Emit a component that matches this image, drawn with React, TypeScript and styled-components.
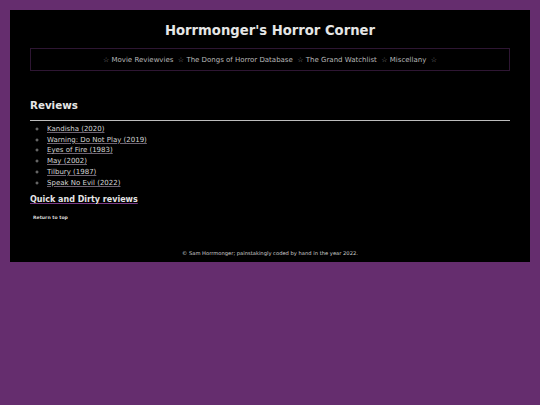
import React from 'react';
import styled, { createGlobalStyle } from 'styled-components';

const GlobalStyle = createGlobalStyle`
  html, body {
    margin: 0;
    padding: 0;
    background: #652d6e;
  }
  body {
    padding: 10px;
    font-family: "DejaVu Sans", Verdana, sans-serif;
    color: #dcdcdc;
  }
`;

const Page = styled.div`
  background: #000;
  padding: 12px 20px 5px;
`;

const Title = styled.h1`
  margin: 0;
  text-align: center;
  font-size: 13.2px;
  font-weight: bold;
  color: #e6e6e6;
  line-height: 18px;
`;

const Nav = styled.nav`
  margin-top: 8px;
  border: 1px solid #2e1633;
  height: 21px;
  display: flex;
  align-items: center;
  justify-content: center;
  font-size: 7px;
  color: #b8b8b8;
`;

const NavLine = styled.span`
  white-space: pre;
`;

const Star = styled.span`
  color: #8a8a8a;
`;

const SectionTitle = styled.h2`
  margin: 27px 0 0;
  font-size: 10.3px;
  font-weight: bold;
  color: #e6e6e6;
  line-height: 14px;
`;

const Rule = styled.hr`
  margin: 8px 0 0;
  border: none;
  border-top: 1px solid #bdbdbd;
`;

const List = styled.ul`
  margin: 3px 0 0;
  padding-left: 17px;
  font-size: 7px;
  line-height: 10.7px;
  list-style: circle;

  li::marker {
    color: #888;
    font-size: 6px;
  }
`;

const ReviewLink = styled.a`
  color: #d6d6d6;
  text-decoration: underline;
  text-decoration-color: #6e6472;
`;

const SubTitle = styled.a`
  display: block;
  margin-top: 6px;
  font-size: 8px;
  font-weight: bold;
  color: #e6e6e6;
  line-height: 12px;
  text-decoration: underline;
  text-decoration-color: #7b3b88;
  text-decoration-thickness: 1px;
`;

const TopLink = styled.a`
  display: block;
  margin: 9px 0 0 3px;
  font-size: 4.6px;
  font-weight: bold;
  color: #d8d8d8;
  text-decoration: none;
`;

const Footer = styled.footer`
  margin-top: 29px;
  text-align: center;
  font-size: 5.2px;
  color: #cfcfcf;
  line-height: 8px;
`;

const reviews = [
  'Kandisha (2020)',
  'Warning: Do Not Play (2019)',
  'Eyes of Fire (1983)',
  'May (2002)',
  'Tilbury (1987)',
  'Speak No Evil (2022)',
];

const navItems = ['Movie Reviewvies', 'The Dongs of Horror Database', 'The Grand Watchlist', 'Miscellany'];

export default function App() {
  return (
    <>
      <GlobalStyle />
      <Page>
        <Title>Horrmonger's Horror Corner</Title>
        <Nav>
          <NavLine>
            {navItems.map((item) => (
              <React.Fragment key={item}>
                <Star>☆</Star> {item}{'  '}
              </React.Fragment>
            ))}
            <Star>☆</Star>
          </NavLine>
        </Nav>
        <SectionTitle>Reviews</SectionTitle>
        <Rule />
        <List>
          {reviews.map((r) => (
            <li key={r}>
              <ReviewLink href="#">{r}</ReviewLink>
            </li>
          ))}
        </List>
        <SubTitle href="#">Quick and Dirty reviews</SubTitle>
        <TopLink href="#">Return to top</TopLink>
        <Footer>© Sam Horrmonger; painstakingly coded by hand in the year 2022.</Footer>
      </Page>
    </>
  );
}
